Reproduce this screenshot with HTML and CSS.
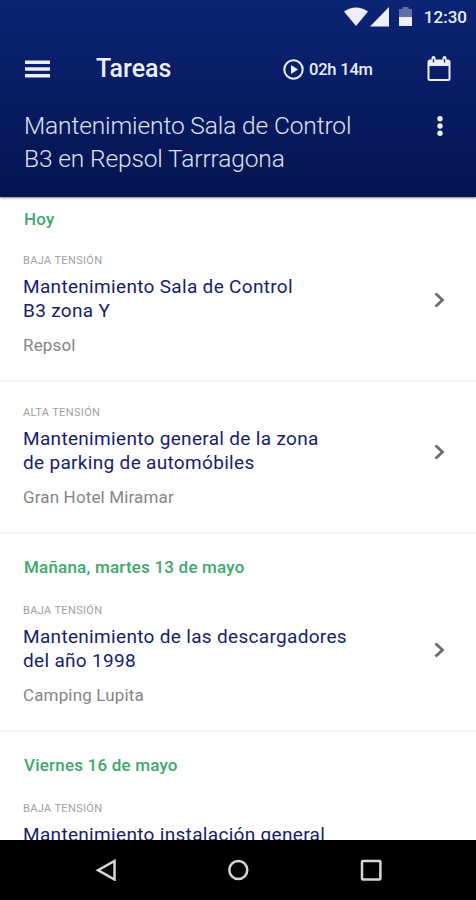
FILE: index.html
```
<!DOCTYPE html>
<html lang="es">
<head>
    <meta charset="utf-8">
    <title>Tareas</title>
    <link rel="stylesheet" href="styles.css">
</head>
<body>
    <div class="screen">
        <header class="header">
            <!-- Android status bar -->
            <div class="status-bar">
                <svg class="wifi" width="24" height="20" viewBox="0 0 24 20"><path d="M0 4.5Q12-3.5 24 4.5L12 19Z"/></svg>
                <svg class="signal" width="19" height="20" viewBox="0 0 19 20"><path d="M0 19.5L19 0V19.5Z"/></svg>
                <svg class="battery" width="13" height="20" viewBox="0 0 13 20"><path d="M0 2H3.5V0H9.5V2H13V10H0Z" opacity=".38"/><path d="M0 10H13V19H0Z"/></svg>
                <span class="clock">12:30</span>
            </div>
            <div class="toolbar">
                <svg class="menu-icon" width="25" height="18" viewBox="0 0 25 18"><path d="M0 .5H25V4H0ZM0 7.2H25V10.7H0ZM0 14H25V17.5H0Z"/></svg>
                <h1 class="title">Tareas</h1>
                <div class="timer">
                    <svg width="21" height="21" viewBox="0 0 21 21"><circle cx="10.5" cy="10.5" r="9.2" fill="none" stroke="#eceef8" stroke-width="2"/><path d="M8 6L15 10.5L8 15Z"/></svg>
                    <span class="time">02h 14m</span>
                </div>
                <svg class="calendar" width="24" height="26" viewBox="0 0 24 26"><path fill-rule="evenodd" d="M3 3.5H4.5V2A2 2 0 0 1 8.5 2V3.5H15.5V2A2 2 0 0 1 19.5 2V3.5H21A2.5 2.5 0 0 1 23.5 6V22.5A2.5 2.5 0 0 1 21 25H3A2.5 2.5 0 0 1 .5 22.5V6A2.5 2.5 0 0 1 3 3.5ZM2.5 10V23H21.5V10Z"/><path class="rings" d="M6.5 3V6.5M17.5 3V6.5"/></svg>
            </div>
            <div class="project">
                <p class="project-name">Mantenimiento Sala de Control<br>B3 en Repsol Tarrragona</p>
                <svg class="more" width="8" height="20" viewBox="0 0 8 20"><circle cx="4" cy="2.7" r="2.7"/><circle cx="4" cy="10" r="2.7"/><circle cx="4" cy="17.3" r="2.7"/></svg>
            </div>
        </header>

        <main class="tasks">
            <h2 class="day">Hoy</h2>
            <div class="task">
                <div class="info">
                    <div class="category">BAJA TENSIÓN</div>
                    <div class="name">Mantenimiento Sala de Control<br>B3 zona Y</div>
                    <div class="client">Repsol</div>
                </div>
                <svg class="chevron" width="11" height="16" viewBox="0 0 11 16"><path d="M1.5 1.5L8.5 8L1.5 14.5"/></svg>
            </div>
            <div class="task no-day">
                <div class="info">
                    <div class="category">ALTA TENSIÓN</div>
                    <div class="name">Mantenimiento general de la zona<br>de parking de automóbiles</div>
                    <div class="client">Gran Hotel Miramar</div>
                </div>
                <svg class="chevron" width="11" height="16" viewBox="0 0 11 16"><path d="M1.5 1.5L8.5 8L1.5 14.5"/></svg>
            </div>

            <h2 class="day">Mañana, martes 13 de mayo</h2>
            <div class="task">
                <div class="info">
                    <div class="category">BAJA TENSIÓN</div>
                    <div class="name">Mantenimiento de las descargadores<br>del año 1998</div>
                    <div class="client">Camping Lupita</div>
                </div>
                <svg class="chevron" width="11" height="16" viewBox="0 0 11 16"><path d="M1.5 1.5L8.5 8L1.5 14.5"/></svg>
            </div>

            <h2 class="day">Viernes 16 de mayo</h2>
            <div class="task">
                <div class="info">
                    <div class="category">BAJA TENSIÓN</div>
                    <div class="name">Mantenimiento instalación general</div>
                </div>
            </div>
        </main>

        <!-- Android navigation bar -->
        <nav class="nav-bar">
            <svg width="22" height="22" viewBox="0 0 22 22"><path d="M20.500 2V20.500L4 11.200Z"/></svg>
            <svg width="22" height="22" viewBox="0 0 22 22"><circle cx="11.3" cy="11" r="9"/></svg>
            <svg width="22" height="22" viewBox="0 0 22 22"><rect x="2" y="2" width="18.4" height="18.4" rx="1"/></svg>
        </nav>
    </div>
</body>
</html>
```
FILE: styles.css
```
body {
    margin: 0;
    font-family: Roboto, "Liberation Sans", sans-serif;
    background-color: #fff;
}
h1, h2, p {
    margin: 0;
}
svg {
    flex: none;
    display: block;
}
.screen {
    display: flex;
    flex-direction: column;
    height: 900px;
    overflow: hidden;
}
/* Header */
.header {
    box-sizing: border-box;
    flex: none;
    height: 197px;
    color: #eceef8;
    fill: #eceef8;
    background: linear-gradient(#0b2474, #07185a 75%, #051450);
    box-shadow: 0 1px 2px rgba(0, 0, 0, 0.5);
}
.status-bar {
    display: flex;
    align-items: center;
    justify-content: flex-end;
    height: 34px;
    padding-right: 9px;
}
.signal {
    margin-left: 2px;
}
.battery {
    margin-left: 10px;
}
.clock {
    margin-left: 12px;
    font-size: 17px;
    font-weight: 500;
}
.toolbar {
    display: flex;
    align-items: center;
    height: 70px;
    padding: 0 25px;
}
.title {
    width: 187px;
    margin-left: 46px;
    font-size: 25px;
    font-weight: 500;
    line-height: 34px;
}
.timer {
    display: flex;
    align-items: center;
    gap: 5px;
    flex: 1;
}
.time {
    font-size: 16.5px;
    font-weight: 500;
    letter-spacing: -0.2px;
}
.project {
    display: flex;
    justify-content: space-between;
    padding: 5px 32px 0 24px;
}
.project-name {
    font-size: 24.5px;
    font-weight: 300;
    line-height: 33px;
    letter-spacing: -0.12px;
    color: #dfe2f0;
}
.more {
    margin-top: 7px;
}
.rings {
    fill: none;
    stroke: #0a1f6b;
    stroke-width: 1.2;
}
/* Task list */
.tasks {
    flex: 1;
    min-height: 0;
    overflow: hidden;
}
.day {
    padding: 23px 24px 2px;
    font-size: 17px;
    font-weight: 500;
    line-height: 20px;
    letter-spacing: 0.2px;
    color: #3fa86c;
}
.day:first-child {
    padding-top: 12px;
    padding-bottom: 0;
}
.task {
    display: flex;
    align-items: center;
    justify-content: space-between;
    padding: 24px 31px 25px 23px;
    border-bottom: 2px solid #f3f3f4;
}
.task.no-day {
    padding-top: 23px;
}
.category {
    font-size: 11px;
    line-height: 16px;
    letter-spacing: 0.35px;
    color: #a0a0a0;
}
.name {
    margin-top: 6px;
    font-size: 19px;
    line-height: 24px;
    letter-spacing: 0.32px;
    color: #15216f;
    white-space: nowrap;
}
.client {
    margin-top: 12px;
    font-size: 17px;
    line-height: 20px;
    letter-spacing: 0.15px;
    color: #858585;
}
.chevron {
    margin-bottom: 9px;
    fill: none;
    stroke: #6b6b6b;
    stroke-width: 2.8;
}
/* Bottom bar */
.nav-bar {
    display: flex;
    align-items: center;
    justify-content: center;
    gap: 111px;
    flex: none;
    height: 60px;
    background-color: #000;
}
.nav-bar svg {
    fill: none;
    stroke: #d6d6d6;
    stroke-width: 2.5;
}
```
